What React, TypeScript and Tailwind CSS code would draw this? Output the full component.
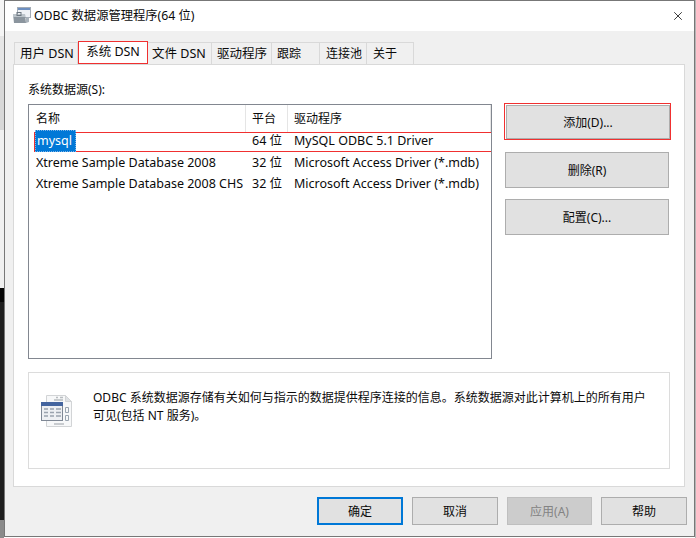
import { X } from 'lucide-react';

const tabs = [
  { label: '用户 DSN', width: 'w-[64px] pl-[5px] text-[12.500px]' },
  { label: '系统 DSN', width: 'w-[70px] text-[12.500px]', active: true },
  { label: '文件 DSN', width: 'w-[64px] pl-[4px] text-[12.500px]' },
  { label: '驱动程序', width: 'w-[60px] pl-[5px] text-[12.500px]' },
  { label: '跟踪', width: 'w-[48px] pl-[5px]' },
  { label: '连接池', width: 'w-[47px] pl-[6px]' },
  { label: '关于', width: 'w-[47px] pl-[6px]' },
];

const rows = [
  { name: 'Xtreme Sample Database 2008', platform: '32 位', driver: 'Microsoft Access Driver (*.mdb)' },
  { name: 'Xtreme Sample Database 2008 CHS', platform: '32 位', driver: 'Microsoft Access Driver (*.mdb)' },
];

function TitleIcon() {
  return (
    <svg width="18" height="18" viewBox="0 0 18 18">
      <rect x="4.500" y="0.500" width="13" height="10" fill="#eef1f5" stroke="#a4acb5" />
      <rect x="5" y="1" width="12" height="2" fill="#6d8fc0" />
      <path d="M0 7h12l1 9H1z" fill="#8b959e" />
      <path d="M0 7h12v3H0z" fill="#bcc4ca" />
      <rect x="4" y="5.500" width="4" height="3" fill="none" stroke="#6d7780" />
      <path d="M13 11l3-1v5l-3 1z" fill="#a9b2ba" />
    </svg>
  );
}

function InfoIcon() {
  return (
    <svg width="32" height="33" viewBox="0 0 32 33">
      <path d="M5.500 0.500h19l6 6v25h-25z" fill="#f7f8f9" stroke="#d2d4d6" />
      <path d="M24.500 0.500v6h6z" fill="#dfe2e5" stroke="#d2d4d6" />
      <path d="M13 5h9M15 2.500h2M19 2.500h3" stroke="#b8bcc0" strokeWidth="1.500" />
      <path d="M24.500 12.500h3v5h-3zM24.500 20.500h3v5h-3z" fill="none" stroke="#9aa5b0" />
      <path d="M13 29h10" stroke="#b8bcc0" strokeWidth="1.500" />
      <rect x="0.500" y="7.500" width="21" height="18" fill="#eef0f3" stroke="#7f8895" />
      <rect x="0" y="7" width="22" height="4" fill="#44659f" />
      <path d="M3 14h4M9 14h4M15 14h5M3 17.500h4M9 17.500h4M15 17.500h5M3 21h4M9 21h4M15 21h5" stroke="#9ba3ae" strokeWidth="1.500" />
    </svg>
  );
}

function Button({ label, className }: { label: string; className: string }) {
  return (
    <div className={`flex items-center justify-center pt-px ${className}`}>
      {label}
    </div>
  );
}

export default function App() {
  return (
    <div
      className="flex h-[538px] w-[696px] overflow-hidden text-[12px] text-[#0a0a0a]"
      style={{ fontFamily: '"Noto Sans", "Noto Sans CJK SC", sans-serif' }}
    >
      {/* Desktop behind the dialog */}
      <div className="flex w-[4px] shrink-0 flex-col">
        <div className="h-[36px] bg-[#f5f5f5]" />
        <div className="h-[34px] bg-[#e6e6e6]" />
        <div className="h-[60px] bg-[#d8d8d8]" />
        <div className="h-[158px] bg-[#f0f0f0]" />
        <div className="h-[14px] bg-[#050505]" />
        <div className="h-[218px] bg-[#1e1e1e]" />
        <div className="flex-1 bg-[#8a8a8a]" />
      </div>

      {/* Dialog */}
      <div className="flex h-[537px] w-[691px] shrink-0 flex-col border border-[#777] bg-[#f0f0f0]">
        <div className="flex h-[30px] items-center bg-white pl-[8px]">
          <TitleIcon />
          <span className="ml-[3px] text-[12.300px] leading-none">ODBC 数据源管理程序(64 位)</span>
          <X className="ml-auto mr-[9px] h-[14px] w-[14px] text-black" strokeWidth={1.300} />
        </div>

        <div className="flex items-end pl-[9px] pt-[10px]">
          {tabs.map((tab) =>
            tab.active ? (
              <div
                key={tab.label}
                className={`flex h-[23px] items-center justify-center border border-[#f03030] bg-white pb-px ${tab.width}`}
              >
                {tab.label}
              </div>
            ) : (
              <div
                key={tab.label}
                className={`flex h-[22px] items-center border border-b-0 border-l-0 border-[#d9d9d9] pt-px first:border-l ${tab.width}`}
              >
                {tab.label}
              </div>
            ),
          )}
        </div>

        <div className="ml-[8px] mr-[9px] flex h-[423px] flex-col border border-[#d9d9d9] bg-white pl-[14px] pr-[13px]">
          <div className="flex h-[39px] items-end pb-[8px] leading-none">系统数据源(S):</div>

          <div className="flex items-start">
            <div className="h-[255px] w-[464px] border border-[#828790] bg-white text-[12.500px]">
              <div className="flex h-[27px] items-center text-[12px]">
                <div className="flex h-full w-[217px] items-center border-r border-[#e5e5e5] pl-[7px]">名称</div>
                <div className="flex h-full w-[42px] items-center border-r border-[#e5e5e5] pl-[6px]">平台</div>
                <div className="flex h-full flex-1 items-center border-r border-[#e5e5e5] pl-[6px]">驱动程序</div>
              </div>
              <div className="mb-px ml-[5px] flex h-[20px] items-center border border-r-0 border-[#f03030] pb-[2px]">
                <div className="w-[211px]">
                  <span className="flex h-[22px] w-[41px] items-center border border-dotted border-[#7fb4e6] bg-[#0078d7] pl-[1px] text-white">
                    mysql
                  </span>
                </div>
                <div className="w-[42px] pl-[6px]">64 位</div>
                <div className="pl-[6px]">MySQL ODBC 5.1 Driver</div>
              </div>
              {rows.map((row) => (
                <div key={row.name} className="flex h-[21px] items-center whitespace-nowrap">
                  <div className="w-[223px] pl-[7px] pr-0">{row.name}</div>
                  <div className="w-[42px]">{row.platform}</div>
                  <div>{row.driver}</div>
                </div>
              ))}
            </div>

            <div className="ml-[12px] flex w-[167px] flex-col">
              <div className="-mt-[1px] h-[37px] border border-[#f03030] pl-px pt-px">
                <Button label="添加(D)..." className="h-[34px] w-[164px] border border-[#adadad] bg-[#e1e1e1]" />
              </div>
              <Button label="删除(R)" className="ml-px mt-[12px] h-[36px] w-[164px] border border-[#adadad] bg-[#e1e1e1]" />
              <Button label="配置(C)..." className="ml-px mt-[11px] h-[36px] w-[164px] border border-[#adadad] bg-[#e1e1e1]" />
            </div>
          </div>

          <div className="mt-[13px] flex h-[97px] w-[642px] border border-[#dcdcdc]">
            <div className="ml-[12px] mt-[22px]">
              <InfoIcon />
            </div>
            <p className="ml-[20px] mt-[16px] w-[560px] leading-[18px]">
              ODBC 系统数据源存储有关如何与指示的数据提供程序连接的信息。系统数据源对此计算机上的所有用户可见(包括 NT 服务)。
            </p>
          </div>
        </div>

        <div className="flex gap-[9px] pl-[312px] pt-[10px]">
          <Button label="确定" className="h-[28px] w-[86px] border-2 border-[#0078d7] bg-[#e1e1e1]" />
          <Button label="取消" className="h-[28px] w-[86px] border border-[#adadad] bg-[#e1e1e1]" />
          <Button label="应用(A)" className="h-[28px] w-[85px] border border-[#bfbfbf] bg-[#cccccc] text-[#838383]" />
          <Button label="帮助" className="h-[28px] w-[86px] border border-[#adadad] bg-[#e1e1e1]" />
        </div>
      </div>

      <div className="flex-1 bg-[#b5b5b5]" />
    </div>
  );
}
